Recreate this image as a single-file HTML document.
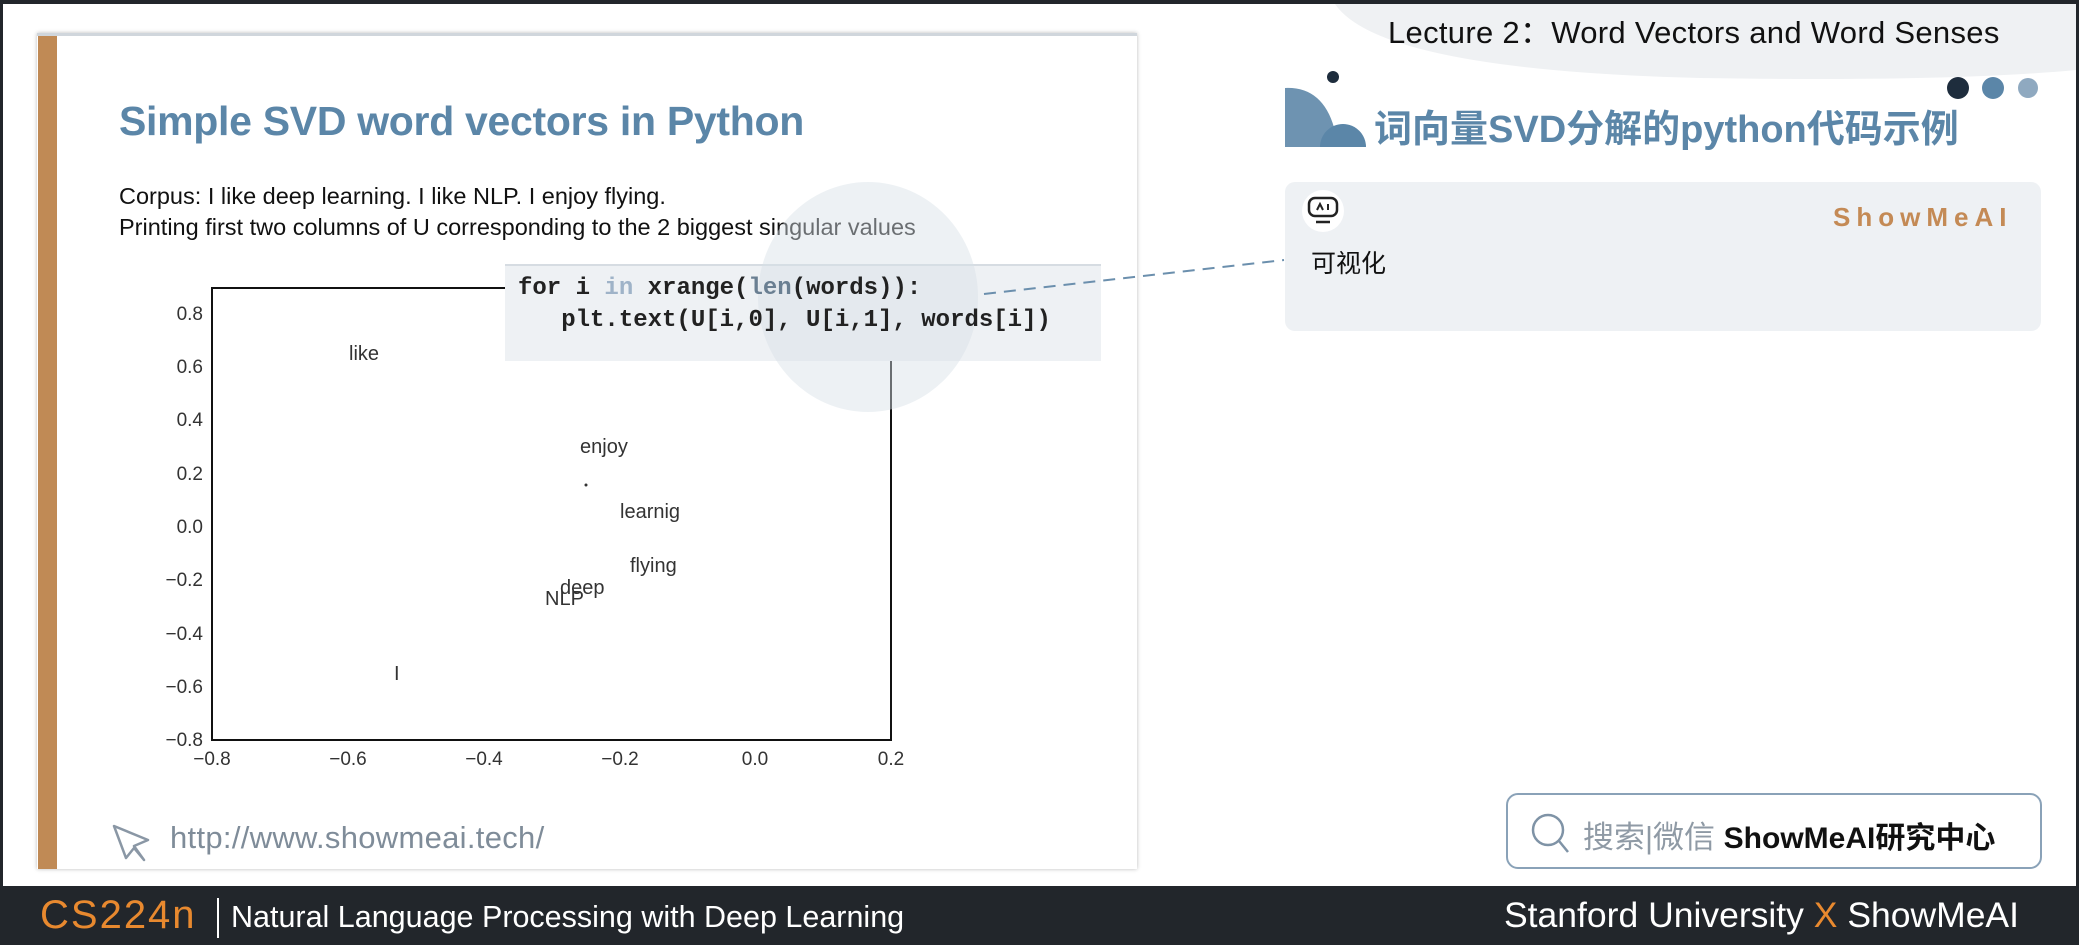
<!DOCTYPE html>
<html><head><meta charset="utf-8"><style>
*{margin:0;padding:0;box-sizing:border-box}
body{width:2079px;height:945px;overflow:hidden;background:#fff;position:relative;font-family:"Liberation Sans","Noto Sans CJK SC",sans-serif}
.a{position:absolute;white-space:nowrap}
</style></head><body>
<div class="a" style="left:0;top:0;width:2079px;height:4px;background:#22262b"></div>
<div class="a" style="left:0;top:0;width:3px;height:886px;background:#22262b"></div>
<div class="a" style="right:0;top:0;width:3px;height:886px;background:#22262b"></div>
<svg class="a" style="left:0;top:0" width="2079" height="120"><path d="M1335 4 Q1380 70 1700 78 Q1950 82 2076 70 L2076 4 Z" fill="#eff1f3"/></svg>
<div class="a" style="left:1388px;top:7px;font-size:31px;color:#111;letter-spacing:0.3px">Lecture 2：Word Vectors and Word Senses</div>
<div class="a" style="left:37px;top:33px;width:1100px;height:836px;background:#fff;box-shadow:0 0 4px #bbb;border-top:3px solid #d0d6dc"></div>
<div class="a" style="left:38px;top:36px;width:19px;height:833px;background:#c08a55"></div>
<div class="a" style="left:119px;top:98px;font-size:41px;font-weight:bold;color:#5b86a8;letter-spacing:-0.3px">Simple SVD word vectors in Python</div>
<div class="a" style="left:119px;top:181px;font-size:23.5px;color:#111;line-height:31px">Corpus: I like deep learning. I like NLP. I enjoy flying.<br>Printing first two columns of U corresponding to the 2 biggest singular values</div>
<svg class="a" style="left:0;top:0" width="1140" height="790" font-family="Liberation Sans" font-size="19" fill="#333">
<rect x="212" y="288" width="679" height="452" fill="none" stroke="#111" stroke-width="2"/>
<g text-anchor="end">
<text x="203" y="320">0.8</text><text x="203" y="373">0.6</text><text x="203" y="426">0.4</text><text x="203" y="480">0.2</text><text x="203" y="533">0.0</text><text x="203" y="586">−0.2</text><text x="203" y="640">−0.4</text><text x="203" y="693">−0.6</text><text x="203" y="746">−0.8</text></g>
<g text-anchor="middle">
<text x="212" y="765">−0.8</text><text x="348" y="765">−0.6</text><text x="484" y="765">−0.4</text><text x="620" y="765">−0.2</text><text x="755" y="765">0.0</text><text x="891" y="765">0.2</text></g>
<g font-size="20"><text x="349" y="360">like</text><text x="580" y="453">enjoy</text><text x="620" y="518">learnig</text><text x="630" y="572">flying</text><text x="560" y="594">deep</text><text x="545" y="605">NLP</text><text x="394" y="680">I</text></g>
<circle cx="586" cy="485" r="1.5" fill="#333"/>
</svg>
<div class="a" style="left:505px;top:264px;width:596px;height:97px;background:#eef1f4;border-top:2px solid #d6dce2"></div>
<div class="a" style="left:758px;top:182px;width:220px;height:230px;border-radius:50%;background:rgba(215,223,231,0.45)"></div>
<div class="a" style="left:518px;top:273px;font-family:'Liberation Mono',monospace;font-size:24px;font-weight:bold;line-height:32px;color:#222">for i <span style="color:#9fb3c8">in</span> xrange(<span style="color:#6a7f92">len</span>(words)):<br>&nbsp;&nbsp;&nbsp;plt.text(U[i,0], U[i,1], words[i])</div>
<svg class="a" style="left:0;top:0" width="1300" height="320"><line x1="984" y1="294" x2="1284" y2="260" stroke="#6b8fad" stroke-width="2" stroke-dasharray="12 8"/></svg>
<svg class="a" style="left:108px;top:818px" width="50" height="50"><path d="M6 8 L40 22 L26 28 L36 42 L26 30 L18 40 Z" fill="none" stroke="#8a97a5" stroke-width="2.5" stroke-linejoin="round"/></svg>
<div class="a" style="left:170px;top:820px;font-size:31px;color:#7f8c99;letter-spacing:0.3px">http://www.showmeai.tech/</div>
<svg class="a" style="left:1270px;top:60px" width="120" height="90"><circle cx="63" cy="17" r="6" fill="#1e2d3d"/><path d="M15 28 Q60 26 68 87 L15 87 Z" fill="#6e93b1"/><path d="M50 87 A23 23 0 0 1 96 87 Z" fill="#5b86a8"/></svg>
<svg class="a" style="left:1940px;top:70px" width="110" height="40"><circle cx="18" cy="18" r="11" fill="#1e2d3d"/><circle cx="53" cy="18" r="11" fill="#5b86a8"/><circle cx="88" cy="18" r="10" fill="#8fa9c0"/></svg>
<div class="a" style="left:1374px;top:98px;font-size:38px;font-weight:bold;color:#5b86a8">词向量SVD分解的python代码示例</div>
<div class="a" style="left:1285px;top:182px;width:756px;height:149px;background:#eef1f4;border-radius:10px"></div>
<div class="a" style="left:1302px;top:190px;width:42px;height:42px;border-radius:50%;background:#fff"></div>
<svg class="a" style="left:1306px;top:195px" width="34" height="32"><rect x="3" y="3" width="28" height="18" rx="6" fill="none" stroke="#222" stroke-width="2.5"/><path d="M11 15 L14 9 L17 15 M22 9 L22 15" stroke="#222" stroke-width="2" fill="none"/><line x1="10" y1="27" x2="24" y2="27" stroke="#222" stroke-width="2.5"/></svg>
<div class="a" style="left:1833px;top:202px;font-size:26px;font-weight:bold;color:#c48a55;letter-spacing:6px">ShowMeAI</div>
<div class="a" style="left:1311px;top:244px;font-size:25px;color:#111">可视化</div>
<div class="a" style="left:1506px;top:793px;width:536px;height:76px;border:2px solid #8aa2b8;border-radius:12px"></div>
<svg class="a" style="left:1528px;top:810px" width="44" height="46"><circle cx="20" cy="20" r="15" fill="none" stroke="#7f93a6" stroke-width="2.5"/><line x1="31" y1="31" x2="40" y2="42" stroke="#7f93a6" stroke-width="2.5"/></svg>
<div class="a" style="left:1583px;top:812px;font-size:31px;color:#8f9aa5">搜索|微信 <b style="color:#111;font-size:30px">ShowMeAI研究中心</b></div>
<div class="a" style="left:0;top:886px;width:2079px;height:59px;background:#22262b"></div>
<div class="a" style="left:40px;top:893px;font-size:40px;color:#e8892f;letter-spacing:2px">CS224n</div>
<div class="a" style="left:217px;top:898px;width:2px;height:40px;background:#fff"></div>
<div class="a" style="left:231px;top:900px;font-size:30.5px;color:#fff">Natural Language Processing with Deep Learning</div>
<div class="a" style="left:1504px;top:895px;font-size:35.5px;color:#fff">Stanford University <span style="color:#e8892f">X</span> ShowMeAI</div>
</body></html>
